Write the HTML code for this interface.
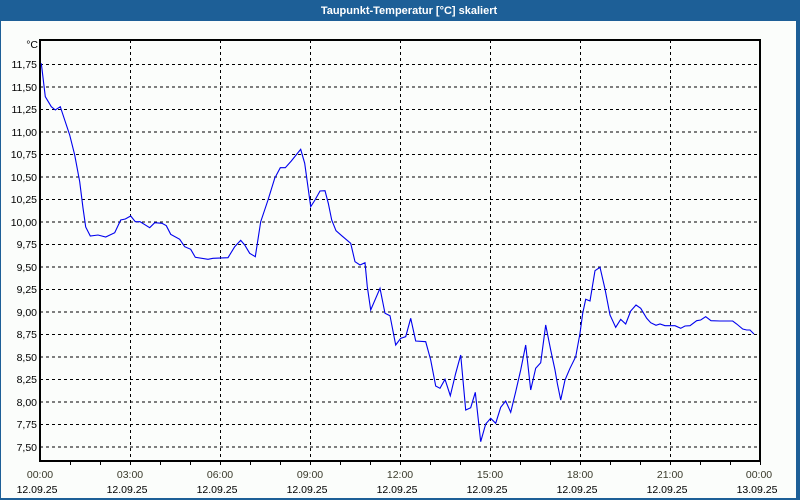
<!DOCTYPE html>
<html><head><meta charset="utf-8"><style>
html,body{margin:0;padding:0;width:800px;height:500px;overflow:hidden;background:#1d5f97;}
svg{display:block;}
text{font-family:"Liberation Sans",sans-serif;font-size:10.5px;fill:#000;}
</style></head><body>
<svg width="800" height="500" xmlns="http://www.w3.org/2000/svg">
<rect x="0" y="0" width="800" height="500" fill="#1d5f97"/>
<rect x="1" y="21" width="795" height="477" fill="#fbfdfb"/>
<text x="409" y="14" text-anchor="middle" style="font-weight:bold;font-size:11px;fill:#fff">Taupunkt-Temperatur [°C] skaliert</text>
<g stroke="#000" stroke-width="1" stroke-dasharray="3,3" shape-rendering="crispEdges">
<path d="M40 64.5H760M40 87H760M40 109.5H760M40 132H760M40 154.5H760M40 177H760M40 199.5H760M40 222H760M40 244.5H760M40 267H760M40 289.5H760M40 312H760M40 334.5H760M40 357H760M40 379.5H760M40 402H760M40 424.5H760M40 447H760"/>
<path d="M130.5 40V461M220.5 40V461M310.5 40V461M400.5 40V461M490.5 40V461M580.5 40V461M670.5 40V461"/>
</g>
<g stroke="#000" stroke-width="2" fill="none" shape-rendering="crispEdges">
<path d="M40 40H760V461H40Z"/>
</g>
<g stroke="#000" stroke-width="1" shape-rendering="crispEdges">
<path d="M70.5 461v4M100.5 461v4M130.5 461v4M160.5 461v4M190.5 461v4M220.5 461v4M250.5 461v4M280.5 461v4M310.5 461v4M340.5 461v4M370.5 461v4M400.5 461v4M430.5 461v4M460.5 461v4M490.5 461v4M520.5 461v4M550.5 461v4M580.5 461v4M610.5 461v4M640.5 461v4M670.5 461v4M700.5 461v4M730.5 461v4M760.5 461v4"/>
</g>
<g text-anchor="end">
<text x="38" y="48">°C</text>
<text x="37" y="68">11,75</text><text x="37" y="91">11,50</text><text x="37" y="113">11,25</text><text x="37" y="136">11,00</text>
<text x="37" y="158">10,75</text><text x="37" y="181">10,50</text><text x="37" y="203">10,25</text><text x="37" y="226">10,00</text>
<text x="37" y="248">9,75</text><text x="37" y="271">9,50</text><text x="37" y="293">9,25</text><text x="37" y="316">9,00</text>
<text x="37" y="338">8,75</text><text x="37" y="361">8,50</text><text x="37" y="383">8,25</text><text x="37" y="406">8,00</text>
<text x="37" y="428">7,75</text><text x="37" y="451">7,50</text>
</g>
<g text-anchor="middle">
<text x="40" y="478" style="fill:#3a3a2a">00:00</text><text x="130" y="478" style="fill:#3a3a2a">03:00</text><text x="220" y="478" style="fill:#3a3a2a">06:00</text><text x="310" y="478" style="fill:#3a3a2a">09:00</text><text x="400" y="478" style="fill:#3a3a2a">12:00</text><text x="490" y="478" style="fill:#3a3a2a">15:00</text><text x="580" y="478" style="fill:#3a3a2a">18:00</text><text x="670" y="478" style="fill:#3a3a2a">21:00</text><text x="759" y="478" style="fill:#3a3a2a">00:00</text>
<text x="37" y="493">12.09.25</text><text x="127" y="493">12.09.25</text><text x="217" y="493">12.09.25</text><text x="307" y="493">12.09.25</text><text x="397" y="493">12.09.25</text><text x="487" y="493">12.09.25</text><text x="577" y="493">12.09.25</text><text x="667" y="493">12.09.25</text><text x="757" y="493">13.09.25</text>
</g>
<polyline fill="none" stroke="#0000ee" stroke-width="1.1" points="41.3,63.3 42.7,75 45.3,96.7 51.3,106.7 55.3,110 60.3,106.7 64.7,120 69.7,135 74.7,155 79.7,181.7 83,208 85.7,227 90.3,236 98,235 105.7,237 114.7,232.7 120.7,220 125.3,219 130.7,216 135.3,221.7 140,221.7 149.7,227.7 154.7,222.7 162,223.3 166.3,225.7 170.7,234.3 179.7,239.3 184.7,246.7 190.7,249.3 195.3,257.3 208,259.3 213,258.3 228,257.7 234.7,246.7 240.7,240.3 244.7,245 249.7,253.3 255.3,256.7 260.7,221.7 268,200 274.7,178.3 280.3,167.7 285.3,167.7 291.3,161 300.7,149.3 304.7,163.3 310.7,206.7 315,200 320,191 325,190.7 328.3,203.3 331.7,220 336,230.7 341.7,235.7 350.7,243.3 355,261.7 360,265 365,262.7 367.3,286.7 370.7,310 380,288.3 385,313.3 390,315.7 395.7,345 400.7,338.3 405.7,336.7 410.7,318.3 415.7,341 425.7,341.7 430.7,360 435.7,386 440,388.3 445,379.3 450.3,395.7 455.7,373.3 460.7,355 465.7,410 470.7,407.7 475.3,392.3 480.7,441.7 485.7,424 490.7,418.3 495.7,423.3 500.7,407.3 505.7,401 510.7,412.3 515.7,391.7 520.7,370 525.7,345 530.7,390 535.7,368.3 540.7,362.7 545.7,325 550.7,350 555,370 557.3,383.3 560.7,400 565,380 570,368.3 575.7,356.7 580,333.3 582.7,313.3 585.7,299.3 590,301 595,270.7 600,267.3 605,289 610,315 615.7,327.3 620.7,319.3 625.7,324 630.7,311 636,305 640.7,308.3 646.7,318.3 650.7,322.7 656,325.3 660,324 665,325.7 675,325.7 680.7,328.3 685,326 690,325.7 696.7,320.7 700.7,320 705.7,316.7 711,320.7 720,321 732.7,321 736.7,324 742.7,329 746.7,330 750,330 754,334"/>
</svg>
</body></html>
